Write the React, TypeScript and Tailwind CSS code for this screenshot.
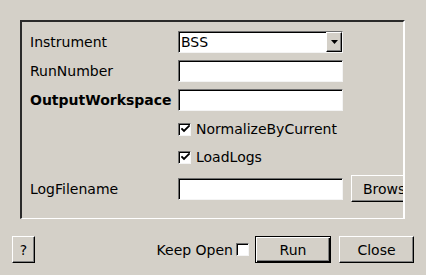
const font = { fontFamily: '"DejaVu Sans", Verdana, sans-serif' }

const sunken =
  "border-t border-l border-r border-b border-t-[#707070] border-l-[#707070] border-r-[#f4f4f4] border-b-[#f4f4f4] shadow-[inset_1px_1px_0_#000] bg-white"

const raised =
  "border border-t-white border-l-white border-r-black border-b-black shadow-[inset_-1px_-1px_0_#808080] bg-[#d4d0c8]"

function TextBox() {
  return <div className={`${sunken} w-[165px] h-[22px] shrink-0`} />
}

function CheckBox({ checked }: { checked: boolean }) {
  return (
    <div className={`${sunken} w-[13px] h-[13px] shrink-0 flex items-center justify-center`}>
      {checked && (
        <svg width="9" height="9" viewBox="0 0 9 9" className="ml-[1px] mt-[1px]">
          <path d="M1 4 L3 6 L8 1" fill="none" stroke="#000" strokeWidth="1.8" strokeLinecap="square" />
        </svg>
      )}
    </div>
  )
}

function Combo({ value }: { value: string }) {
  return (
    <div className={`${sunken} w-[165px] h-[22px] shrink-0 flex items-stretch`}>
      <div className="flex-1 flex items-center pl-[2px] text-sm text-black leading-none">{value}</div>
      <div className={`${raised} w-[16px] flex items-center justify-center`}>
        <svg width="7" height="4" viewBox="0 0 7 4">
          <path d="M0 0 H7 L3.5 4 Z" fill="#000" />
        </svg>
      </div>
    </div>
  )
}

function Label({ text, bold }: { text: string; bold?: boolean }) {
  return (
    <div className={`w-[148px] shrink-0 text-sm text-black leading-none whitespace-nowrap ${bold ? "font-bold" : ""}`}>
      {text}
    </div>
  )
}

export default function App() {
  return (
    <div className="w-[426px] h-[275px] bg-[#d4d0c8] overflow-hidden" style={font}>
      <div className="pt-[20px] pl-[20px]">
        <div className="w-[385px] h-[199px] border-t-2 border-l-2 border-r-2 border-b border-t-[#2a2a2a] border-l-[#2a2a2a] border-r-white border-b-white overflow-hidden pt-[9px] pl-[8px]">
          <div className="flex items-center h-[22px]">
            <Label text="Instrument" />
            <Combo value="BSS" />
          </div>
          <div className="flex items-center h-[22px] mt-[7px]">
            <Label text="RunNumber" />
            <TextBox />
          </div>
          <div className="flex items-center h-[22px] mt-[7px]">
            <Label text="OutputWorkspace" bold />
            <TextBox />
          </div>
          <div className="flex items-center h-[28px] mt-[4px] pl-[148px] gap-[5px]">
            <CheckBox checked />
            <span className="text-sm text-black leading-none">NormalizeByCurrent</span>
          </div>
          <div className="flex items-center h-[28px] pl-[148px] gap-[5px]">
            <CheckBox checked />
            <span className="text-sm text-black leading-none">LoadLogs</span>
          </div>
          <div className="flex items-center h-[27px] mt-[4px] w-max">
            <Label text="LogFilename" />
            <TextBox />
            <button className={`${raised} ml-[8px] w-[75px] h-[27px] shrink-0 text-sm text-black leading-none`}>
              Browse
            </button>
          </div>
        </div>
      </div>
      <div className="flex items-center justify-between px-[12px] mt-[17px]">
        <button className={`${raised} w-[23px] h-[27px] text-sm text-black leading-none`}>?</button>
        <div className="flex items-center">
          <span className="text-sm text-black leading-none">Keep Open</span>
          <div className="ml-[3px]">
            <CheckBox checked={false} />
          </div>
          <button className="ml-[6px] w-[76px] h-[27px] border border-black shadow-[inset_1px_1px_0_#fff,inset_-1px_-1px_0_#000,inset_-2px_-2px_0_#808080] bg-[#d4d0c8] text-sm text-black leading-none">
            Run
          </button>
          <button className={`${raised} ml-[8px] w-[75px] h-[27px] text-sm text-black leading-none`}>Close</button>
        </div>
      </div>
    </div>
  )
}
